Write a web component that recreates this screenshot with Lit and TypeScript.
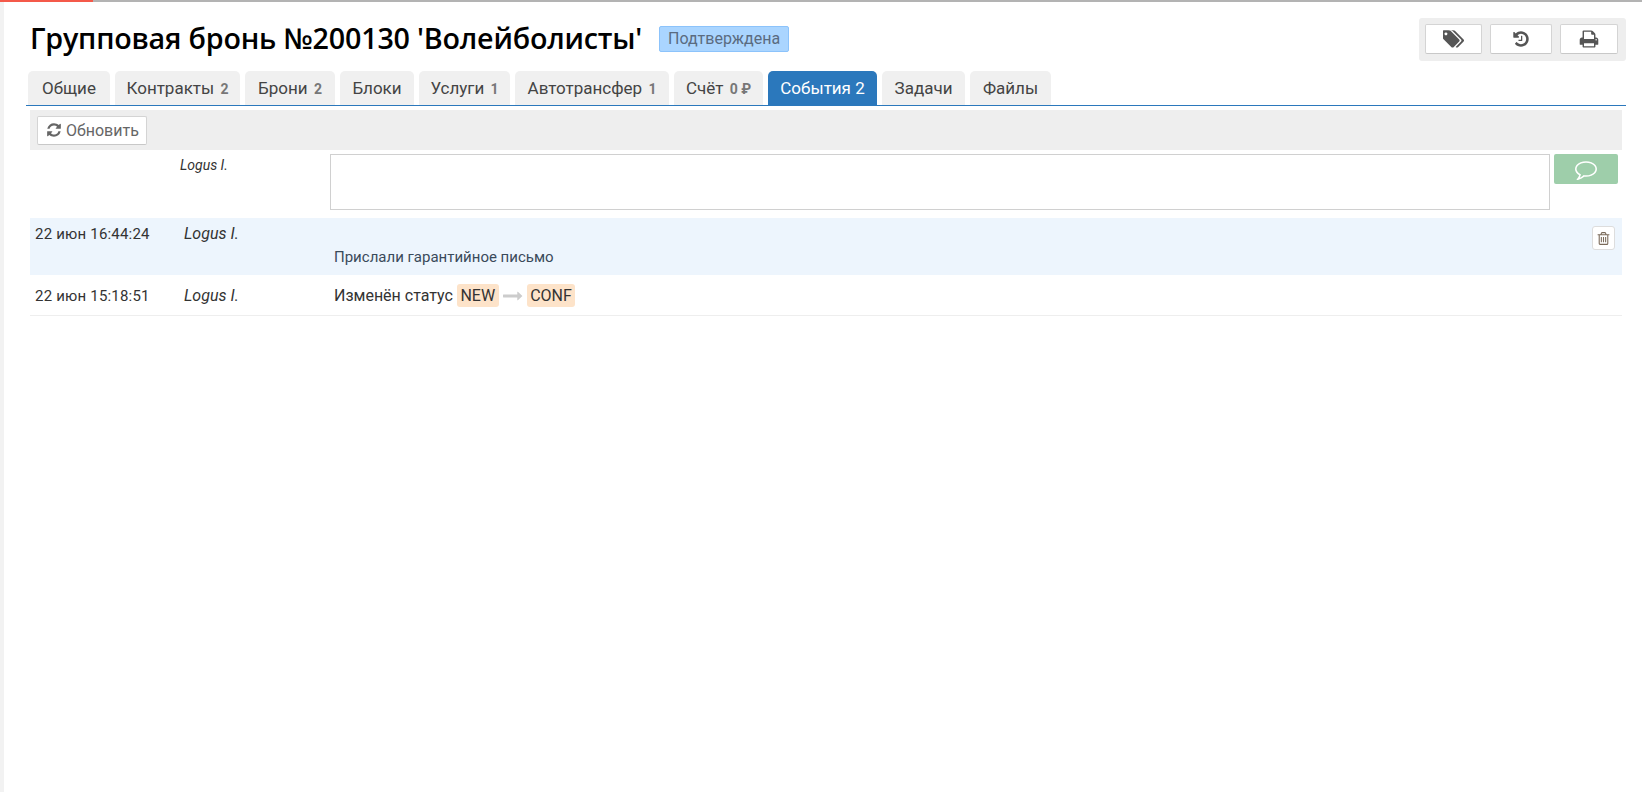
import { LitElement, html, css, svg } from "lit";
import { customElement } from "lit/decorators.js";

const P = {
  refresh: "M1639 1056q0 5-1 7-64 268-268 434.5t-478 166.5q-146 0-282.5-55t-243.5-157l-129 129q-19 19-45 19t-45-19-19-45v-448q0-26 19-45t45-19h448q26 0 45 19t19 45-19 45l-137 137q71 66 161 102t187 36q134 0 250-65t186-179q11-17 53-117 8-23 30-23h192q13 0 22.5 9.5t9.5 22.5zm25-800v448q0 26-19 45t-45 19h-448q-26 0-45-19t-19-45 19-45l138-138q-148-137-349-137-134 0-250 65t-186 179q-11 17-53 117-8 23-30 23h-199q-13 0-22.5-9.5t-9.5-22.5v-7q65-268 270-434.5t480-166.5q146 0 284 55.5t245 156.5l130-129q19-19 45-19t45 19 19 45z",
  print: "M448 1536h896v-256h-896v256zm0-640h896v-384h-160q-40 0-68-28t-28-68v-160h-640v640zm1152 64q0-26-19-45t-45-19-45 19-19 45 19 45 45 19 45-19 19-45zm128 0v416q0 13-9.5 22.5t-22.5 9.5h-224v160q0 40-28 68t-68 28h-960q-40 0-68-28t-28-68v-160h-224q-13 0-22.5-9.5t-9.5-22.5v-416q0-79 56.5-135.5t135.5-56.5h64v-544q0-40 28-68t68-28h672q40 0 88 20t76 48l152 152q28 28 48 76t20 88v256h64q79 0 135.5 56.5t56.5 135.5z",
  history: "M1664 896q0 156-61 298t-164 245-245 164-298 61q-172 0-327-72.5t-264-204.5q-7-10-6.5-22.5t8.5-20.5l137-138q10-9 25-9 16 2 23 12 73 95 179 147t225 52q104 0 198.5-40.5t163.5-109.5 109.5-163.5 40.5-198.5-40.5-198.5-109.5-163.5-163.5-109.5-198.5-40.5q-98 0-188 35.5t-160 101.5l137 138q31 30 14 69-17 40-59 40h-448q-26 0-45-19t-19-45v-448q0-42 40-59 39-17 69 14l130 129q107-101 244.5-156.5t284.5-55.5q156 0 298 61t245 164 164 245 61 298zm-640-288v448q0 14-9 23t-23 9h-320q-14 0-23-9t-9-23v-64q0-14 9-23t23-9h224v-352q0-14 9-23t23-9h64q14 0 23 9t9 23z",
  tags: "M384 448q0-53-37.5-90.5t-90.5-37.5-90.5 37.5-37.5 90.5 37.5 90.5 90.5 37.5 90.5-37.5 37.5-90.5zm1067 576q0 53-37 90l-491 492q-39 37-91 37-53 0-90-37l-715-716q-38-37-64.5-101t-26.5-117v-416q0-52 38-90t90-38h416q53 0 117 26.5t102 64.5l715 714q37 39 37 91zm384 0q0 53-37 90l-491 492q-39 37-91 37-36 0-59-14t-53-45l470-470q37-37 37-90 0-52-37-91l-715-714q-38-38-102-64.5t-117-26.5h224q53 0 117 26.5t102 64.5l715 714q37 39 37 91z",
  comment: "M896 384q-204 0-381.5 69.5t-282 187.5-104.5 255q0 112 71.5 213.5t201.5 175.5l87 50-27 96q-24 91-70 172 152-63 275-171l43-38 57 6q69 8 130 8 204 0 381.5-69.5t282-187.5 104.5-255-104.5-255-282-187.5-381.5-69.5zm896 512q0 174-120 321.5t-326 233-450 85.5q-70 0-145-8-198 175-460 242-49 14-114 22h-5q-15 0-27-10.5t-16-27.5v-1q-3-4-.5-12t2-10 4.5-9.5l6-9 7-8.5 8-9q7-8 31-34.5t34.5-38 31-39.5 32.5-51 27-59 26-76q-157-89-247.5-220t-90.5-281q0-174 120-321.5t326-233 450-85.5 450 85.5 326 233 120 321.5z",
  trash: "M704 736v576q0 14-9 23t-23 9h-64q-14 0-23-9t-9-23v-576q0-14 9-23t23-9h64q14 0 23 9t9 23zm256 0v576q0 14-9 23t-23 9h-64q-14 0-23-9t-9-23v-576q0-14 9-23t23-9h64q14 0 23 9t9 23zm256 0v576q0 14-9 23t-23 9h-64q-14 0-23-9t-9-23v-576q0-14 9-23t23-9h64q14 0 23 9t9 23zm128 724v-948h-896v948q0 22 7 40.5t14.5 27 10.5 8.5h832q3 0 10.5-8.5t14.5-27 7-40.5zm-672-1076h448l-48-117q-7-9-17-11h-317q-10 2-17 11zm928 32v64q0 14-9 23t-23 9h-96v948q0 83-47 143.5t-113 60.5h-832q-66 0-113-58.5t-47-141.5v-952h-96q-14 0-23-9t-9-23v-64q0-14 9-23t23-9h309l70-167q15-37 54-63t79-26h320q40 0 79 26t54 63l70 167h309q14 0 23 9t9 23z",
  arrow: "M1728 893q0 14-10 24l-384 354q-16 14-35 6-19-9-19-29v-224h-1248q-14 0-23-9t-9-23v-192q0-14 9-23t23-9h1248v-224q0-21 19-29t35 5l384 350q10 10 10 23z",
};

const icon = (d: string, size: number, vbw = 1792) =>
  html`<svg width=${size} height=${size} viewBox="0 0 ${vbw} 1792" fill="currentColor">${svg`<path d=${d}></path>`}</svg>`;

const tabs: [string, string, number, boolean][] = [
  ["Общие", "", 82, false],
  ["Контракты", "2", 125, false],
  ["Брони", "2", 90, false],
  ["Блоки", "", 74, false],
  ["Услуги", "1", 91, false],
  ["Автотрансфер", "1", 154, false],
  ["Счёт", "0 ₽", 89, false],
  ["События 2", "", 109, true],
  ["Задачи", "", 83, false],
  ["Файлы", "", 81, false],
];

@customElement("app-root")
export class AppRoot extends LitElement {
  static styles = css`
    :host {
      display: block;
      height: 792px;
      overflow: hidden;
      background: #fff;
      font-family: Roboto, "Noto Sans", sans-serif;
      color: #333;
    }
    .topbar { display: flex; height: 2px; background: #b3b3b3; }
    .topbar i { display: block; width: 93px; background: #f4594a; }
    .page { display: flex; height: 790px; }
    .strip { width: 4px; background: #f2f2f2; flex: none; }
    .main { flex: 1; padding: 16px 16px 0 22px; min-width: 0; }
    .head { display: flex; height: 43px; align-items: flex-start; }
    .title {
      margin: 1px 0 0 4px;
      font: 600 28.7px/38px "Open Sans", "Noto Sans", sans-serif;
      color: #000;
      letter-spacing: -0.2px;
      white-space: nowrap;
    }
    .badge {
      margin: 8px 0 0 17px;
      height: 26px;
      box-sizing: border-box;
      padding: 0 8px;
      border: 1px solid #8cc3fb;
      border-radius: 2px;
      background: #aad5ff;
      color: #5a6b80;
      font-size: 16px;
      line-height: 24px;
    }
    .actions {
      margin-left: auto;
      display: flex;
      gap: 8px;
      padding: 6px 8px 7px 6px;
      background: #eee;
      border-radius: 3px;
    }
    .actions button {
      height: 30px;
      width: 57px;
      display: flex;
      align-items: center;
      justify-content: center;
      padding: 0;
      border: 1px solid #d4d4d4;
      border-bottom-color: #c8c8c8;
      border-radius: 2px;
      background: #fff;
      color: #555;
    }
    .actions button.wide { width: 62px; }
    .actions button.print { width: 58px; }
    .tabs {
      display: flex;
      gap: 5px;
      margin-top: 10px;
      height: 34px;
      padding-left: 2px;
      border-bottom: 1px solid #2b78bc;
    }
    .tab {
      box-sizing: border-box;
      height: 34px;
      border-radius: 5px 5px 0 0;
      background: #f0f0f0;
      color: #444;
      font-size: 17px;
      line-height: 34px;
      text-align: center;
      white-space: nowrap;
    }
    .tab b { font-size: 14px; font-weight: 700; color: #777; margin-left: 2px; }
    .tab.active { background: #2b78bc; color: #fff; }
    .tool {
      display: flex;
      align-items: center;
      height: 40px;
      margin: 4px 4px 0;
      padding-left: 7px;
      background: #eee;
      box-sizing: border-box;
    }
    .refresh {
      display: flex;
      align-items: center;
      gap: 4px;
      box-sizing: border-box;
      width: 110px;
      height: 29px;
      padding: 0 0 0 8px;
      border: 1px solid #d4d4d4;
      border-bottom-color: #c8c8c8;
      border-radius: 2px;
      background: #fff;
      color: #666;
      font: 16px Roboto, sans-serif;
    }
    .compose {
      display: grid;
      grid-template-columns: 150px 150px 1fr 64px;
      height: 68px;
      margin: 0 8px 0 4px;
    }
    .compose .who {
      padding-top: 8px;
      font-size: 14px;
      font-style: italic;
      line-height: 15px;
    }
    .compose .box {
      box-sizing: border-box;
      height: 56px;
      margin: 4px 4px 0 0;
      border: 1px solid #d0d0d0;
      background: #fff;
    }
    .compose .send {
      display: flex;
      align-items: center;
      justify-content: center;
      height: 30px;
      margin-top: 4px;
      padding: 0;
      border: 0;
      border-radius: 2px;
      background: #9eceaa;
      color: #fff;
    }
    .row {
      display: grid;
      grid-template-columns: 154px 150px 1fr;
      margin: 0 4px;
      box-sizing: border-box;
    }
    .row.blue { height: 57px; background: #edf5fd; position: relative; }
    .row.plain { height: 41px; border-bottom: 1px solid #eee; }
    .row .date { padding-left: 5px; font-size: 15px; letter-spacing: 0.2px; line-height: 16px; }
    .row .who { font-size: 16px; font-style: italic; line-height: 20px; }
    .blue .date { padding-top: 8px; }
    .blue .who { padding-top: 6px; }
    .plain .date { padding-top: 13px; }
    .plain .who { padding-top: 11px; }
    .blue .msg { padding-top: 31px; font-size: 15px; line-height: 17px; color: #3a4a5a; }
    .plain .msg {
      display: flex;
      align-items: center;
      height: 23px;
      margin-top: 9px;
      font-size: 16px;
      white-space: nowrap;
    }
    .st {
      display: inline-block;
      padding: 0 3.5px;
      margin-left: 4px;
      background: #fde3c9;
      border-radius: 3px;
      line-height: 23px;
    }
    .st.next { margin-left: 0; }
    .arr { display: flex; margin: 0 4px; color: #ccc; }
    .del {
      position: absolute;
      right: 7px;
      top: 8px;
      display: flex;
      align-items: center;
      justify-content: center;
      box-sizing: border-box;
      width: 23px;
      height: 24px;
      padding: 0;
      border: 1px solid #ddd;
      border-radius: 3px;
      background: #fff;
      color: #7a6a5a;
    }
  `;

  render() {
    return html`
      <div class="topbar"><i></i></div>
      <div class="page">
        <div class="strip"></div>
        <div class="main">
          <div class="head">
            <h1 class="title">Групповая бронь №200130 'Волейболисты'</h1>
            <span class="badge">Подтверждена</span>
            <div class="actions">
              <button>${icon(P.tags, 22, 1920)}</button>
              <button class="wide">${icon(P.history, 18)}</button>
              <button class="print">${icon(P.print, 20)}</button>
            </div>
          </div>
          <div class="tabs">
            ${tabs.map(
              ([t, n, w, a]) => html`<div class="tab ${a ? "active" : ""}" style="width:${w}px">${t}${n ? html` <b>${n}</b>` : ""}</div>`
            )}
          </div>
          <div class="tool">
            <button class="refresh">${icon(P.refresh, 16)}Обновить</button>
          </div>
          <div class="compose">
            <div></div>
            <div class="who">Logus I.</div>
            <div class="box"></div>
            <button class="send">${icon(P.comment, 22)}</button>
          </div>
          <div class="row blue">
            <div class="date">22 июн 16:44:24</div>
            <div class="who">Logus I.</div>
            <div class="msg">Прислали гарантийное письмо</div>
            <button class="del">${icon(P.trash, 15)}</button>
          </div>
          <div class="row plain">
            <div class="date">22 июн 15:18:51</div>
            <div class="who">Logus I.</div>
            <div class="msg">Изменён статус<span class="st">NEW</span><span class="arr">${icon(P.arrow, 20)}</span><span class="st next">CONF</span></div>
          </div>
        </div>
      </div>
    `;
  }
}
